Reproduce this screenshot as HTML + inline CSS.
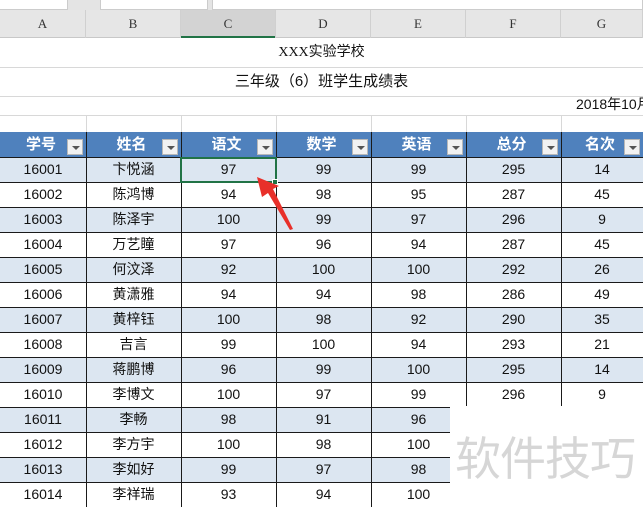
<!DOCTYPE html>
<html><head><meta charset="utf-8"><style>
*{margin:0;padding:0;box-sizing:border-box}
body{width:643px;height:502px;overflow:hidden;background:#fff;position:relative;font-family:"Liberation Sans","Noto Sans CJK SC",sans-serif;}
.a{position:absolute}
.c{position:absolute;text-align:center;font-size:14px;color:#111;line-height:25px;white-space:nowrap;font-family:"Liberation Sans","Noto Sans CJK SC",sans-serif}
.h{color:#fff;font-weight:bold;font-size:15px}
.dd{position:absolute;width:16px;height:16px;background:#f2f2f2;border:1px solid #b8b8b8}
.dd:after{content:"";position:absolute;left:4px;top:6px;border-left:4px solid transparent;border-right:4px solid transparent;border-top:4px solid #555}
.cl{position:absolute;top:10px;height:28px;line-height:28px;text-align:center;font-family:"Liberation Serif",serif;font-size:13px;color:#333;border-right:1px solid #d0d0d0}
</style></head><body>
<div class="a" style="left:0;top:0;width:643px;height:10px;background:#e4e4e4"></div>
<div class="a" style="left:0;top:0;width:68px;height:10px;background:#fff;border-right:1px solid #ccc;border-bottom:1px solid #ccc"></div>
<div class="a" style="left:100px;top:0;width:108px;height:10px;background:#fff;border:1px solid #ccc;border-top:0"></div>
<div class="a" style="left:212px;top:0;width:431px;height:10px;background:#fff;border:1px solid #ccc;border-top:0"></div>
<div class="a" style="left:0;top:10px;width:643px;height:28px;background:#e6e6e6;border-bottom:1px solid #c8c8c8"></div>
<div class="a" style="left:181px;top:10px;width:95px;height:28px;background:#d3d3d3;border-bottom:2px solid #217346"></div>
<div class="cl" style="left:0;width:86px">A</div>
<div class="cl" style="left:86px;width:95px">B</div>
<div class="cl" style="left:181px;width:95px">C</div>
<div class="cl" style="left:276px;width:95px">D</div>
<div class="cl" style="left:371px;width:95px">E</div>
<div class="cl" style="left:466px;width:95px">F</div>
<div class="cl" style="left:561px;width:82px">G</div>
<div class="a" style="left:0;top:67px;width:643px;height:1px;background:#d8d8d8"></div>
<div class="a" style="left:0;top:96px;width:643px;height:1px;background:#d8d8d8"></div>
<div class="a" style="left:0;top:115px;width:643px;height:1px;background:#d8d8d8"></div>
<div class="a" style="left:86px;top:115px;width:1px;height:17px;background:#d8d8d8"></div>
<div class="a" style="left:181px;top:115px;width:1px;height:17px;background:#d8d8d8"></div>
<div class="a" style="left:276px;top:115px;width:1px;height:17px;background:#d8d8d8"></div>
<div class="a" style="left:371px;top:115px;width:1px;height:17px;background:#d8d8d8"></div>
<div class="a" style="left:466px;top:115px;width:1px;height:17px;background:#d8d8d8"></div>
<div class="a" style="left:561px;top:115px;width:1px;height:17px;background:#d8d8d8"></div>
<div class="c" style="left:0;width:643px;top:40px;font-family:'Liberation Serif','Noto Sans CJK SC',serif">XXX实验学校</div>
<div class="c" style="left:0;width:643px;top:69px;font-size:15px">三年级（6）班学生成绩表</div>
<div class="c" style="left:576px;top:92px;text-align:left">2018年10月</div>
<div id="t"></div>
<script>
var L=[0,86,181,276,371,466,561,643];
var H=["学号","姓名","语文","数学","英语","总分","名次"];
var D=[["16001","卞悦涵",97,99,99,295,14],["16002","陈鸿博",94,98,95,287,45],["16003","陈泽宇",100,99,97,296,9],["16004","万艺瞳",97,96,94,287,45],["16005","何汶泽",92,100,100,292,26],["16006","黄潇雅",94,94,98,286,49],["16007","黄梓钰",100,98,92,290,35],["16008","吉言",99,100,94,293,21],["16009","蒋鹏博",96,99,100,295,14],["16010","李博文",100,97,99,296,9],["16011","李畅",98,91,96],["16012","李方宇",100,98,100],["16013","李如好",99,97,98],["16014","李祥瑞",93,94,100]];
var s="";
s+='<div class="a" style="left:0;top:132px;width:643px;height:25px;background:#4f81bd"></div>';
for(var i=0;i<7;i++){var w=L[i+1]-L[i];
s+='<div class="c h" style="left:'+L[i]+'px;width:'+(w-4)+'px;top:132px">'+H[i]+'</div>';
s+='<div class="dd" style="left:'+(L[i]+w-19)+'px;top:139px"></div>';
if(i>0)s+='<div class="a" style="left:'+L[i]+'px;top:132px;width:1px;height:25px;background:#1a1a1a"></div>';}
for(var r=0;r<D.length;r++){var y=157+r*25;
if(r%2==0)s+='<div class="a" style="left:0;top:'+y+'px;width:643px;height:25px;background:#dce6f1"></div>';
s+='<div class="a" style="left:0;top:'+y+'px;width:643px;height:1px;background:#1a1a1a"></div>';
for(var i=0;i<D[r].length;i++){var w=L[i+1]-L[i];
s+='<div class="c" style="left:'+L[i]+'px;width:'+w+'px;top:'+y+'px">'+D[r][i]+'</div>';
if(i>0)s+='<div class="a" style="left:'+L[i]+'px;top:'+y+'px;width:1px;height:25px;background:#1a1a1a"></div>';}}
document.getElementById("t").innerHTML=s;
</script>
<div class="a" style="left:450px;top:406px;width:193px;height:96px;background:#fff"></div>
<div class="a" style="left:455px;top:428px;font-size:46px;line-height:56px;color:#d6d6d6;font-family:'Noto Sans CJK SC',sans-serif;letter-spacing:-1px">软件技巧</div>
<div class="a" style="left:180px;top:157px;width:97px;height:26px;border:2px solid #217346"></div>
<div class="a" style="left:272px;top:179px;width:6px;height:6px;background:#217346;border:1px solid #fff"></div>
<svg class="a" style="left:0;top:0" width="643" height="502"><polygon points="257,177 279,186 273,189 293,229 290,230 268,193 262,197" fill="#e8302a"/></svg>
</body></html>
